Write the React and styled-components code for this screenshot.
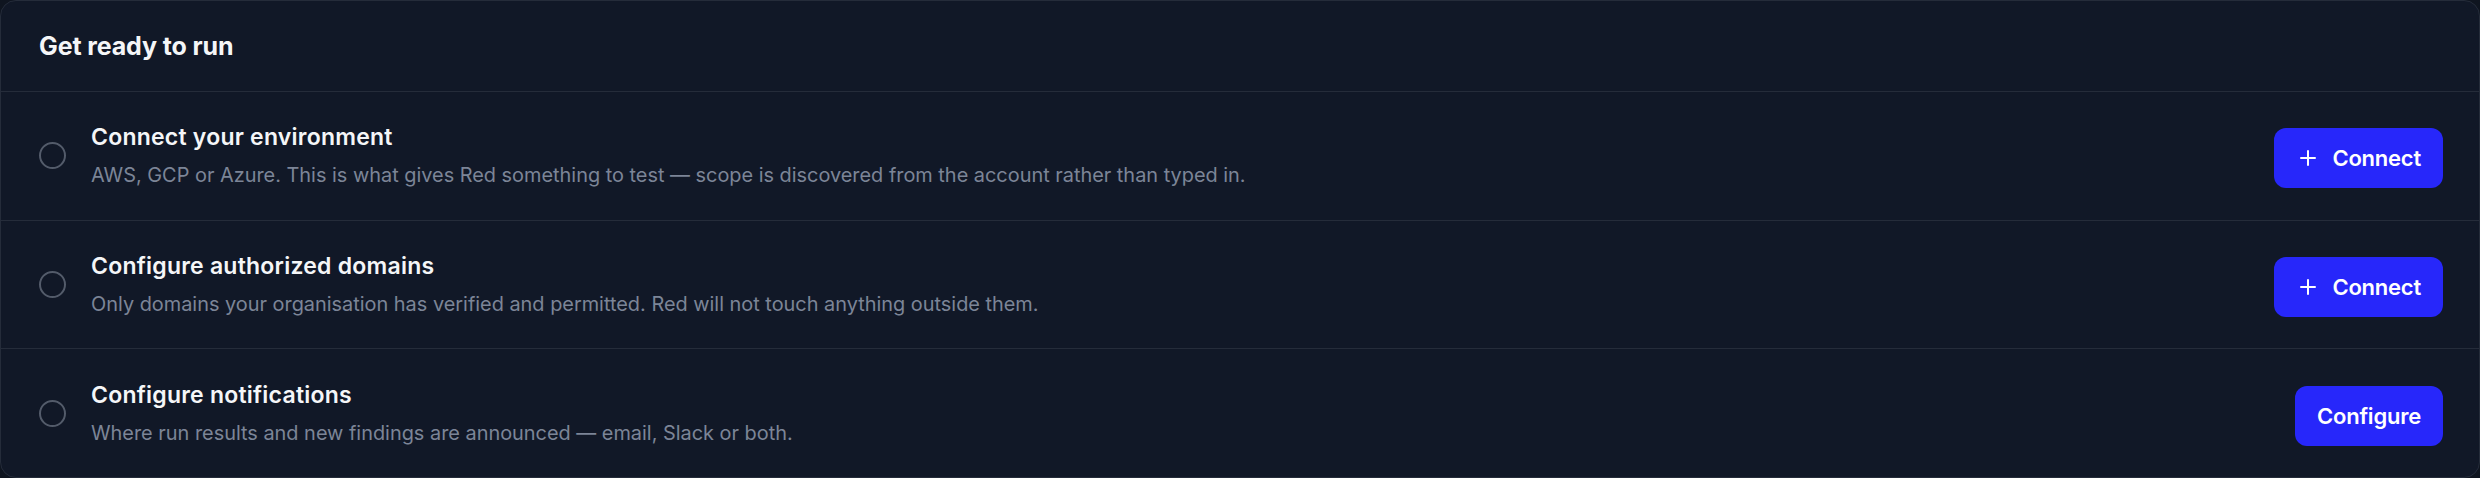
// setup checklist card
import React from "react";
import styled, { createGlobalStyle } from "styled-components";

const GlobalStyle = createGlobalStyle`
  html, body {
    margin: 0;
    padding: 0;
    background: #0f1520;
  }
  body {
    font-family: Inter, "Noto Sans", "Liberation Sans", sans-serif;
    -webkit-font-smoothing: antialiased;
  }
`;

const Card = styled.section`
  box-sizing: border-box;
  width: 2480px;
  height: 478px;
  background: #111827;
  border: 1px solid #252c3a;
  border-radius: 16px;
  display: flex;
  flex-direction: column;
  overflow: hidden;
`;

const Header = styled.header`
  height: 90px;
  display: flex;
  align-items: center;
  padding: 0 38px;
  border-bottom: 1px solid #252c3a;
`;

const Heading = styled.h2`
  margin: 0;
  color: #f5f6f8;
  font-size: 25px;
  font-weight: 700;
  letter-spacing: -0.005em;
`;

const Row = styled.div`
  flex: 1;
  display: flex;
  align-items: center;
  gap: 25px;
  padding: 0 36px 0 38px;
  border-bottom: ${(p) => (p.last ? "none" : "1px solid #252c3a")};
`;

const Check = styled.span`
  flex: none;
  box-sizing: border-box;
  width: 27px;
  height: 27px;
  border-radius: 50%;
  border: 2px solid #535b6a;
`;

const Body = styled.div`
  flex: 1;
  display: flex;
  flex-direction: column;
  gap: 9px;
`;

const Title = styled.div`
  color: #f5f6f8;
  font-size: 23px;
  font-weight: 600;
  line-height: 30px;
  letter-spacing: 0.01em;
`;

const Desc = styled.div`
  color: #7c8597;
  font-size: 19.9px;
  line-height: 28px;
`;

const Button = styled.button`
  flex: none;
  display: flex;
  align-items: center;
  gap: 16px;
  height: 60px;
  margin-top: 5px;
  padding: 0 ${(p) => (p.icon ? "22px 0 26px" : "22px")};
  border: none;
  border-radius: 12px;
  background: #2727fa;
  color: #ffffff;
  font-family: inherit;
  font-size: 22px;
  font-weight: 600;
  letter-spacing: -0.01em;
  cursor: pointer;
`;

const PlusIcon = () => (
  <svg width="16" height="16" viewBox="0 0 16 16" fill="none">
    <path d="M8 1v14M1 8h14" stroke="#fff" strokeWidth="2" strokeLinecap="round" />
  </svg>
);

const steps = [
  {
    title: "Connect your environment",
    desc: "AWS, GCP or Azure. This is what gives Red something to test — scope is discovered from the account rather than typed in.",
    action: "Connect",
    icon: true,
  },
  {
    title: "Configure authorized domains",
    desc: "Only domains your organisation has verified and permitted. Red will not touch anything outside them.",
    action: "Connect",
    icon: true,
  },
  {
    title: "Configure notifications",
    desc: "Where run results and new findings are announced — email, Slack or both.",
    action: "Configure",
    icon: false,
  },
];

export default function App() {
  return (
    <>
      <GlobalStyle />
      <Card>
        <Header>
          <Heading>Get ready to run</Heading>
        </Header>
        {steps.map((s, i) => (
          <Row key={s.title} last={i === steps.length - 1}>
            <Check />
            <Body>
              <Title>{s.title}</Title>
              <Desc>{s.desc}</Desc>
            </Body>
            <Button icon={s.icon}>
              {s.icon && <PlusIcon />}
              {s.action}
            </Button>
          </Row>
        ))}
      </Card>
    </>
  );
}
